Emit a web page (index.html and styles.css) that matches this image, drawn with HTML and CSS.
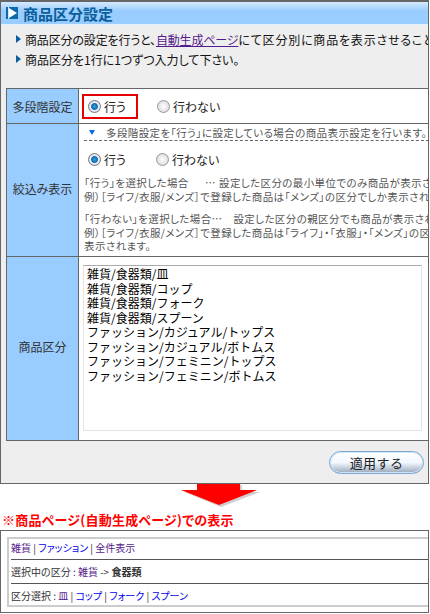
FILE: index.html
```html
<!DOCTYPE html>
<html lang="ja">
<head>
<meta charset="utf-8">
<title>商品区分設定</title>
<link rel="stylesheet" href="styles.css">
</head>
<body>
<section class="panel">
  <h1 class="panel-title">
    <svg class="title-icon" width="12" height="12" viewBox="0 0 12 12"><rect width="12" height="12" fill="#0b6aa8"/><rect x="2" width="1" height="12" fill="#cfe6ff"/><path d="M3 1 L11 6 L3 11 Z" fill="#fff"/></svg>
    商品区分設定
  </h1>
  <ul class="notes">
    <li><span class="tight">商品区分の設定を行うと、</span><a class="visited tight" href="#">自動生成ページ</a><span class="wide">にて区分別に商品を表示させることができます。</span></li>
    <li>商品区分を1行に1つずつ入力して下さい。</li>
  </ul>
  <div class="form-table">
    <div class="label row-1">多段階設定</div>
    <div class="cell row-1">
      <div class="radios highlighted">
        <span class="radio on"></span><span class="radio-text">行う</span>
      </div>
      <div class="radios off-option">
        <span class="radio"></span><span class="radio-text">行わない</span>
      </div>
    </div>
    <div class="label row-2">絞込み表示</div>
    <div class="cell row-2 stacked">
      <p class="hint"><span class="hint-arrow"></span>多段階設定を「行う」に設定している場合の商品表示設定を行います。</p>
      <div class="radio-row">
        <div class="radios"><span class="radio on"></span><span class="radio-text">行う</span></div>
        <div class="radios off-option"><span class="radio"></span><span class="radio-text">行わない</span></div>
      </div>
      <p class="desc"><span class="lead">「行う」を選択した場合</span><span class="dots">…</span>設定した区分の最小単位でのみ商品が表示されます。<br>例）［ライフ/衣服/メンズ］で登録した商品は「メンズ」の区分でしか表示されません。</p>
      <p class="desc">「行わない」を選択した場合…　設定した区分の親区分でも商品が表示されます。<br>例）［ライフ/衣服/メンズ］で登録した商品は「ライフ」・「衣服」・「メンズ」の区分で<br>表示されます。</p>
    </div>
    <div class="label row-3">商品区分</div>
    <div class="cell row-3 area-cell">
      <div class="textarea">雑貨/食器類/皿<br>雑貨/食器類/コップ<br>雑貨/食器類/フォーク<br>雑貨/食器類/スプーン<br>ファッション/カジュアル/トップス<br>ファッション/カジュアル/ボトムス<br>ファッション/フェミニン/トップス<br>ファッション/フェミニン/ボトムス</div>
    </div>
  </div>
  <div class="actions"><button class="apply" type="button">適用する</button></div>
</section>
<div class="arrow-row">
  <svg width="90" height="24" viewBox="0 0 90 24">
    <path d="M20 1 H62 V8 H80 L41 23 L4 8 H20 Z" fill="#888" opacity="0.4"/>
    <path d="M17 0 H60 V6 H77 L39 21 L1 6 H17 Z" fill="#f00"/>
  </svg>
</div>
<h2 class="preview-title">※商品ページ(自動生成ページ)での表示</h2>
<section class="preview">
  <div class="preview-inner">
    <div class="preview-row"><a class="visited" href="#">雑貨</a> | <a href="#">ファッション</a> | <a class="visited" href="#">全件表示</a></div>
    <div class="preview-row">選択中の区分 : <a class="visited" href="#">雑貨</a> -&gt; <b>食器類</b></div>
    <div class="preview-row">区分選択 : <a class="visited" href="#">皿</a> | <a href="#">コップ</a> | <a href="#">フォーク</a> | <a href="#">スプーン</a></div>
  </div>
</section>
</body>
</html>
```
FILE: styles.css
```css
* { box-sizing: border-box; }
html, body { margin: 0; padding: 0; }
body {
  width: 430px;
  height: 614px;
  overflow: hidden;
  background: #fff;
  color: #222;
  font-family: "Noto Sans CJK JP", "Liberation Sans", sans-serif;
  font-feature-settings: "palt";
  font-size: 12px;
  line-height: 13px;
}
a { color: #0000ee; text-decoration: none; }
a.visited { color: #551a8b; }

.panel {
  width: 429px;
  height: 484px;
  border: 1px solid #666;
  border-top-width: 2px;
  background: #eee;
  overflow: hidden;
}
.panel-title {
  display: flex;
  align-items: center;
  gap: 5px;
  height: 23px;
  margin: 0;
  padding-left: 5px;
  border-bottom: 1px solid #e0efff;
  background: linear-gradient(#d5e9ff 0, #99ccff 9px, #99ccff 100%);
  color: #0b5f9c;
  font-size: 15px;
  font-weight: 700;
}
.title-icon { flex: none; }
.notes {
  height: 63px;
  margin: 0;
  padding: 5px 0 0 15px;
  list-style: none;
  white-space: nowrap;
  font-size: 12px;
}
.notes li {
  position: relative;
  height: 20px;
  padding: 3px 0 0 9px;
  color: #111;
}
.notes li::before {
  content: "";
  position: absolute;
  left: 0;
  top: 5px;
  border-left: 5px solid #0b5f9c;
  border-top: 4px solid transparent;
  border-bottom: 4px solid transparent;
}
.notes a { text-decoration: underline; }
.tight { letter-spacing: -0.15px; }
.wide { letter-spacing: 0.8px; }
.form-table {
  display: grid;
  grid-template-columns: 72px 360px;
  grid-template-rows: 35px 133px 184px;
  width: 433px;
  margin-left: 5px;
  border-top: 1px solid #666;
  border-left: 1px solid #666;
}
.label {
  display: flex;
  align-items: center;
  justify-content: center;
  border-right: 1px solid #666;
  border-bottom: 1px solid #666;
  background: #99ccff;
  color: #333;
}
.label.row-2, .label.row-3 { padding-bottom: 4px; }
.cell {
  display: flex;
  align-items: center;
  border-bottom: 1px solid #666;
  background: #fff;
  white-space: nowrap;
  overflow: hidden;
  padding-left: 3px;
}
.stacked {
  display: block;
  padding: 0 0 0 8px;
  color: #555;
  font-size: 10.5px;
}
.radios { display: flex; align-items: center; gap: 3px; color: #222; font-size: 12px; }
.highlighted {
  width: 56px;
  height: 25px;
  margin-top: 1px;
  padding-left: 4px;
  border: 2px solid #e60000;
}
.off-option { margin-left: 19px; }
.radio-row { display: flex; align-items: center; height: 28px; margin: 4px 0 3px 1px; }
.radio-row .off-option { margin-left: 30px; }
.radio {
  width: 13px;
  height: 13px;
  border-radius: 50%;
  border: 1px solid #999;
  background: radial-gradient(circle, #fff 0, #e4e4e4 60%, #c4c4c4 100%);
}
.radio.on {
  background: radial-gradient(circle, #3aa0e0 0, #0a6cab 38%, #eef 50%, #ccc 100%);
  border-color: #777;
}
.hint {
  position: relative;
  height: 17px;
  margin: 0 0 0 -3px;
  padding: 2px 0 0 22px;
  border-bottom: 1px dashed #666;
  line-height: 13px;
  letter-spacing: 0.4px;
}
.hint-arrow {
  position: absolute;
  left: 5px;
  top: 6px;
  border-top: 5px solid #0b66ee;
  border-left: 3.5px solid transparent;
  border-right: 3.5px solid transparent;
}
.desc { margin: 0 0 9px -3px; line-height: 13.5px; letter-spacing: 0.4px; }
.lead { display: inline-block; width: 121px; }
.dots { display: inline-block; width: 14px; }
.area-cell { padding: 8px 0 9px 4px; align-items: stretch; }
.textarea {
  width: 339px;
  border: 1px solid #e4e4e4;
  border-top-color: #aaa;
  padding: 1px 0 0 3px;
  color: #000;
  font-feature-settings: normal;
  font-size: 12px;
  line-height: 14.5px;
  background: #fff;
}
.actions {
  display: flex;
  justify-content: flex-end;
  align-items: center;
  height: 42px;
  padding-right: 4px;
}
.apply {
  width: 95px;
  height: 23px;
  margin-top: 1px;
  border: 1px solid #7fa8d0;
  border-radius: 12px;
  box-shadow: inset 0 0 0 1px #cfe3fa;
  background: linear-gradient(#fff 0, #f2f8ff 50%, #9aa8ba 100%);
  color: #222;
  font-family: inherit;
  font-feature-settings: normal;
  font-size: 13px;
  letter-spacing: 0.4px;
  padding: 0;
}
.arrow-row { height: 24px; padding-left: 180px; }
.preview-title {
  height: 22px;
  margin: 0;
  padding: 5px 0 0 2px;
  color: #f00;
  font-size: 13px;
  font-weight: 700;
  letter-spacing: 0.25px;
  line-height: 14px;
  white-space: nowrap;
}
.preview {
  width: 429px;
  height: 83px;
  padding: 6px 0 0 6px;
  border: 1px solid #666;
  overflow: hidden;
}
.preview-inner {
  width: 440px;
  height: 70px;
  padding: 0 0 0 2px;
  border: 2px solid #ccc;
  border-width: 2px 0 2px 2px;
}
.preview-row {
  width: 420px;
  padding: 5px 0;
  border-bottom: 1px solid #555;
  font-size: 10px;
  line-height: 13px;
  color: #333;
}
.preview-row:first-child { padding-top: 2px; }
.preview-row:last-child { border-bottom: 0; padding-bottom: 2px; }
```
